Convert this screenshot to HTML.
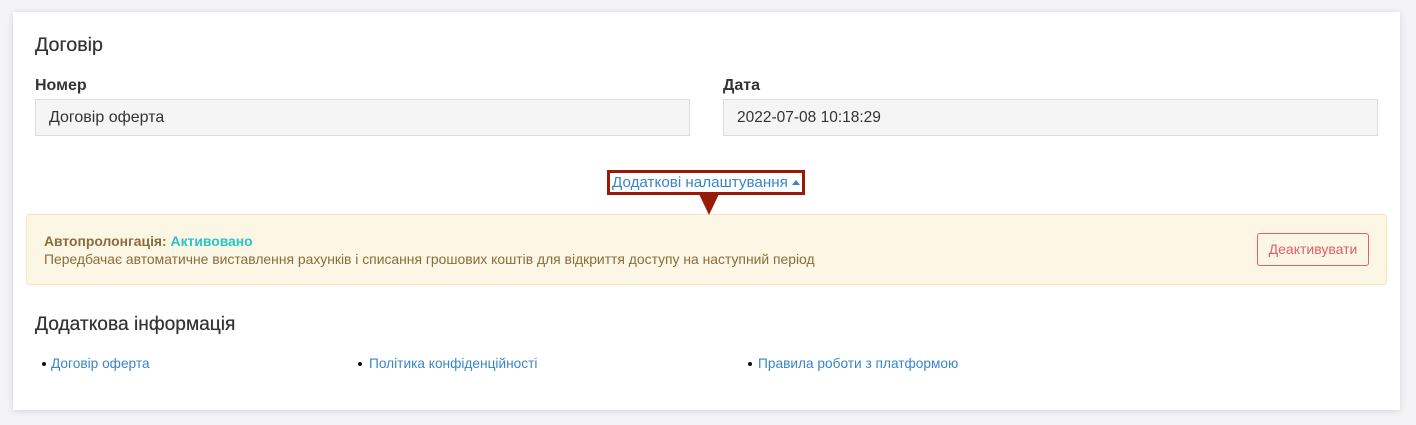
<!DOCTYPE html>
<html><head><meta charset="utf-8"><style>
*{box-sizing:border-box;margin:0;padding:0}
body{width:1416px;height:425px;background:#f4f4f7;font-family:"Liberation Sans","DejaVu Sans",sans-serif;position:relative;overflow:hidden;color:#333}
.card{position:absolute;left:13px;top:12px;width:1387px;height:398px;background:#fff;box-shadow:0 1px 6px rgba(60,60,100,.18)}
.a{position:absolute;white-space:nowrap}
h2{position:absolute;font-weight:normal;color:#333;text-shadow:0 0 .5px #333;white-space:nowrap}
.lbl{font-size:16px;font-weight:bold;color:#333}
.inp{background:#f5f5f5;border:1px solid #ddd;height:37px;padding:9px 13px;color:#333}
.link{color:#3a85c9;font-size:13.7px}
.dot{position:absolute;width:4px;height:4px;border-radius:50%;background:#111}
</style></head><body>
<div class="card"></div>
<h2 style="left:35px;top:34px;font-size:19.7px">Договір</h2>
<div class="a lbl" style="left:35px;top:77px">Номер</div>
<div class="a lbl" style="left:723px;top:77px">Дата</div>
<div class="a inp" style="left:35px;top:99px;width:655px;font-size:16px;padding-top:9px">Договір оферта</div>
<div class="a inp" style="left:723px;top:99px;width:655px;font-size:15.5px;padding-top:9px">2022-07-08 10:18:29</div>
<div class="a" style="left:607px;top:170px;width:198px;height:25px;border:3px solid #9a1a0a"></div>
<div class="a" style="left:612px;top:174px;font-size:15.2px;color:#3a85c9">Додаткові налаштування <span style="display:inline-block;width:0;height:0;border-left:4px solid transparent;border-right:4px solid transparent;border-bottom:5px solid #3a85c9;vertical-align:2px"></span></div>
<div class="a" style="left:26px;top:214px;width:1361px;height:71px;background:#fcf6e4;border:1px solid #f6e6b8;border-radius:3px"></div>
<div class="a" style="left:699px;top:194px;width:0;height:0;border-left:10px solid transparent;border-right:10px solid transparent;border-top:21px solid #9a1a0a"></div>
<div class="a" style="left:44px;top:233px;font-size:13.9px;font-weight:bold;color:#8a6d3b">Автопролонгація: <span style="color:#26c6c6">Активовано</span></div>
<div class="a" style="left:44px;top:251px;font-size:13.9px;color:#8a6d3b">Передбачає автоматичне виставлення рахунків і списання грошових коштів для відкриття доступу на наступний період</div>
<div class="a" style="left:1257px;top:233px;width:112px;height:33px;border:1px solid #e35d6a;border-radius:3px;color:#e35d6a;font-size:14px;text-align:center;line-height:31px">Деактивувати</div>
<h2 style="left:35px;top:314px;font-size:19.2px">Додаткова інформація</h2>
<div class="dot" style="left:42px;top:362px"></div><div class="a link" style="left:51px;top:356px">Договір оферта</div>
<div class="dot" style="left:358px;top:362px"></div><div class="a link" style="left:369px;top:356px">Політика конфіденційності</div>
<div class="dot" style="left:748px;top:362px"></div><div class="a link" style="left:758px;top:356px">Правила роботи з платформою</div>
</body></html>
